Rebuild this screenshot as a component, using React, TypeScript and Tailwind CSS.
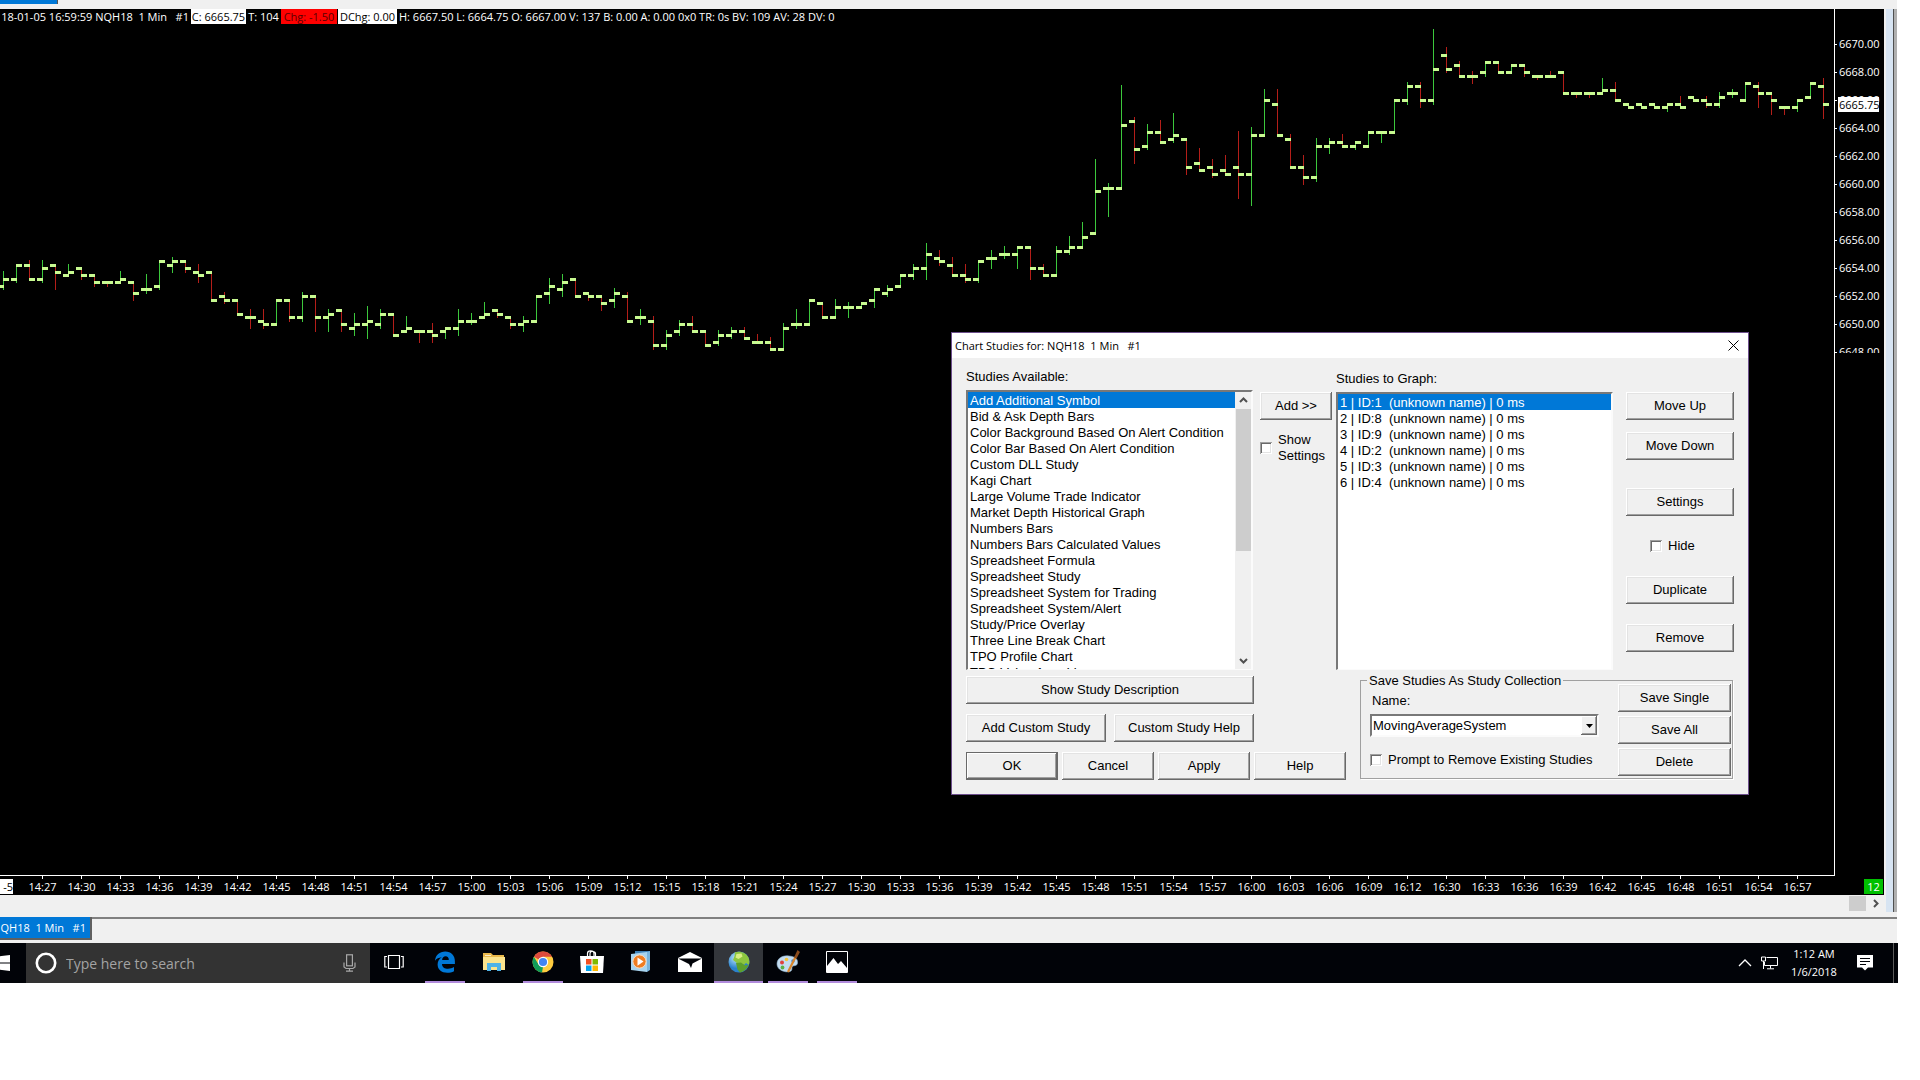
import React from "react";

type Bar = [open: number, high: number, low: number, close: number, up: 0 | 1];

// Each value counts quarter points below 6670.00.
const BARS: Bar[] = [
  [69, 65, 70, 67, 1], [67, 63, 68, 63, 1], [63, 62, 67, 67, 0], [67, 62, 68, 64, 1], [63, 63, 70, 65, 0],
  [66, 63, 66, 65, 1], [64, 64, 67, 66, 0], [66, 66, 69, 68, 0], [68, 68, 69, 68, 0], [68, 65, 68, 67, 1],
  [68, 68, 73, 71, 0], [70, 66, 71, 70, 1], [69, 62, 70, 62, 1], [63, 61, 65, 62, 1], [62, 62, 65, 64, 0],
  [65, 63, 68, 66, 0], [65, 65, 73, 73, 0], [72, 71, 74, 73, 0], [73, 73, 77, 77, 0], [78, 76, 81, 78, 0],
  [79, 76, 81, 80, 0], [80, 73, 80, 73, 1], [73, 73, 79, 78, 0], [78, 71, 79, 72, 1], [72, 72, 82, 78, 0],
  [78, 76, 82, 77, 1], [76, 76, 82, 80, 0], [81, 77, 83, 80, 1], [80, 75, 84, 79, 1], [80, 76, 81, 77, 1],
  [77, 77, 83, 83, 0], [82, 78, 82, 81, 1], [82, 82, 85, 82, 0], [82, 80, 85, 83, 0], [82, 81, 84, 81, 1],
  [81, 76, 83, 79, 1], [79, 77, 80, 79, 1], [78, 74, 78, 77, 1], [76, 76, 78, 77, 0], [78, 78, 81, 80, 0],
  [80, 78, 82, 79, 1], [79, 72, 79, 72, 1], [71, 67, 74, 69, 1], [70, 66, 72, 68, 1], [67, 67, 72, 72, 0],
  [71, 71, 73, 72, 0], [72, 72, 76, 74, 0], [73, 70, 75, 71, 1], [72, 71, 79, 79, 0], [78, 76, 80, 78, 1],
  [79, 78, 87, 86, 0], [86, 82, 87, 83, 1], [82, 79, 83, 80, 1], [80, 78, 82, 82, 0], [82, 82, 86, 86, 0],
  [85, 82, 86, 83, 1], [83, 81, 84, 82, 1], [82, 81, 84, 84, 0], [85, 83, 85, 85, 0], [85, 84, 87, 87, 0],
  [87, 80, 87, 81, 1], [80, 76, 81, 80, 1], [80, 73, 80, 73, 1], [74, 74, 78, 78, 0], [78, 73, 78, 75, 1],
  [75, 74, 78, 75, 1], [75, 74, 75, 74, 1], [73, 70, 75, 70, 1], [71, 69, 72, 70, 1], [69, 66, 69, 66, 1],
  [66, 63, 67, 64, 1], [64, 57, 67, 60, 1], [61, 59, 63, 62, 0], [63, 61, 66, 66, 0], [66, 63, 68, 67, 0],
  [67, 62, 68, 62, 1], [61, 59, 64, 61, 1], [60, 58, 61, 60, 1], [60, 58, 64, 58, 1], [58, 58, 67, 64, 0],
  [64, 63, 66, 66, 0], [66, 58, 66, 59, 1], [59, 55, 60, 58, 1], [58, 51, 58, 55, 1], [54, 33, 54, 42, 1],
  [41, 40, 49, 41, 1], [41, 12, 41, 23, 1], [22, 21, 34, 30, 0], [29, 23, 30, 25, 1], [25, 22, 28, 28, 0],
  [27, 20, 28, 26, 1], [27, 27, 37, 35, 0], [34, 30, 36, 36, 0], [35, 33, 38, 37, 0], [36, 32, 37, 37, 0],
  [35, 25, 44, 37, 0], [37, 24, 46, 26, 1], [26, 13, 26, 16, 1], [17, 13, 26, 26, 0], [27, 26, 35, 35, 0],
  [35, 32, 40, 38, 0], [38, 27, 39, 29, 1], [29, 27, 31, 28, 1], [28, 26, 29, 29, 0], [29, 28, 30, 28, 1],
  [29, 25, 29, 25, 1], [25, 25, 28, 25, 1], [25, 16, 25, 16, 1], [16, 11, 17, 12, 1], [12, 11, 18, 16, 0],
  [16, -4, 17, 7, 1], [3, 1, 8, 7, 0], [6, 5, 9, 9, 0], [9, 8, 11, 9, 0], [8, 5, 9, 5, 1],
  [5, 5, 8, 8, 0], [8, 6, 8, 6, 1], [6, 6, 9, 8, 0], [9, 9, 10, 9, 0], [9, 8, 9, 9, 0],
  [8, 8, 14, 14, 0], [14, 14, 15, 14, 0], [14, 14, 15, 14, 0], [14, 10, 14, 13, 1], [13, 11, 16, 16, 0],
  [17, 17, 18, 18, 0], [17, 17, 18, 18, 0], [17, 17, 18, 18, 0], [18, 17, 19, 17, 1], [17, 15, 18, 18, 0],
  [15, 15, 16, 16, 0], [16, 15, 18, 17, 0], [17, 14, 18, 15, 1], [14, 13, 15, 14, 1], [16, 11, 16, 11, 1],
  [12, 11, 18, 14, 0], [14, 14, 20, 16, 0], [18, 18, 20, 18, 0], [18, 16, 19, 16, 1], [15, 11, 15, 11, 1],
  [12, 10, 21, 17, 0],
];

const TIMES: string[] = (() => {
  const out: string[] = [];
  for (let m = 14 * 60 + 27; m <= 16 * 60 + 57; m += 3) {
    if (m > 16 * 60 + 12 && m < 16 * 60 + 30) continue;
    out.push(`${Math.floor(m / 60)}:${String(m % 60).padStart(2, "0")}`);
  }
  return out;
})();

const PRICES = Array.from({ length: 12 }, (_, i) => `${6670 - i * 2}.00`);

const STUDIES = [
  "Add Additional Symbol", "Bid & Ask Depth Bars", "Color Background Based On Alert Condition",
  "Color Bar Based On Alert Condition", "Custom DLL Study", "Kagi Chart", "Large Volume Trade Indicator",
  "Market Depth Historical Graph", "Numbers Bars", "Numbers Bars Calculated Values", "Spreadsheet Formula",
  "Spreadsheet Study", "Spreadsheet System for Trading", "Spreadsheet System/Alert", "Study/Price Overlay",
  "Three Line Break Chart", "TPO Profile Chart", "TPO Value Area Lines",
];

const GRAPHED = [
  "1 | ID:1  (unknown name) | 0 ms", "2 | ID:8  (unknown name) | 0 ms", "3 | ID:9  (unknown name) | 0 ms",
  "4 | ID:2  (unknown name) | 0 ms", "5 | ID:3  (unknown name) | 0 ms", "6 | ID:4  (unknown name) | 0 ms",
];

const py = (q: number) => Math.round(35 + q * 3.5);

function PriceBars() {
  return (
    <svg width="1834" height="866" viewBox="0 0 1834 866" className="block shrink-0" shapeRendering="crispEdges" aria-label="NQH18 1 minute bars">
      {BARS.map(([, h, l, , up], i) => (
        <rect key={i} x={3 + i * 13} y={py(h) - 1} width="1" height={py(l) - py(h) + 2} fill={up ? "#3cc83c" : "#b41e19"} />
      ))}
      {BARS.map(([o, , , c], i) => (
        <g key={i} fill="#c8fa91">
          <rect x={-2 + i * 13} y={py(o) - 1} width="6" height="3" />
          <rect x={3 + i * 13} y={py(c) - 1} width="6" height="3" />
        </g>
      ))}
    </svg>
  );
}

function PriceAxis() {
  return (
    <div className="relative w-[50px] shrink-0 border-l border-white text-[11px] text-white">
      <div className="h-[344px] overflow-hidden pt-[21px]">
        {PRICES.map((p) => (
          <div key={p} className="flex h-7 items-center gap-[2px]">
            <span className="h-px w-[2px] bg-white" />
            <span>{p}</span>
          </div>
        ))}
      </div>
      <span className="absolute left-[3px] top-[88px] h-[15px] w-[41px] bg-white pl-px leading-[15px] text-black">6665.75</span>
    </div>
  );
}

function TimeAxis() {
  return (
    <div className="flex h-5 justify-end overflow-hidden bg-black text-[11px] leading-[16px] text-white">
      <div className="flex w-[1817px] shrink-0 justify-end border-t border-white">
        <div className="w-[23px] pt-[3px]">
          <span className="block h-[15px] w-[13px] bg-white text-right text-black">-5</span>
        </div>
        {TIMES.map((t) => (
          <div key={t} className="flex w-[39px] flex-col items-center">
            <span className="h-[3px] w-px bg-white" />
            <span>{t}</span>
          </div>
        ))}
      </div>
      <div className="flex w-[67px] shrink-0 justify-between pr-px">
        <span className="h-px w-[18px] bg-white" />
        <span className="mt-1 h-[15px] w-[19px] bg-[#00c000] text-center">12</span>
      </div>
    </div>
  );
}

function Btn({ children, className = "", primary = false }: { children: React.ReactNode; className?: string; primary?: boolean }) {
  const edge = primary
    ? "border border-[#696969] shadow-[inset_-1px_-1px_0_#696969,inset_1px_1px_0_#fff,inset_-2px_-2px_0_#a0a0a0]"
    : "shadow-[inset_-1px_-1px_0_#696969,inset_1px_1px_0_#fff,inset_-2px_-2px_0_#a0a0a0,inset_2px_2px_0_#e3e3e3]";
  return (
    <button type="button" className={`h-7 bg-[#f0f0f0] text-center ${edge} ${className}`}>
      {children}
    </button>
  );
}

function Check({ children, className = "" }: { children: React.ReactNode; className?: string }) {
  return (
    <label className={`flex items-center gap-[6px] ${className}`}>
      <input type="checkbox" className="size-3 shrink-0 appearance-none bg-white shadow-[inset_1px_1px_0_#a0a0a0,inset_-1px_-1px_0_#fff,inset_2px_2px_0_#696969,inset_-2px_-2px_0_#e3e3e3]" />
      <span>{children}</span>
    </label>
  );
}

function ListBox({ items, label, scroll = false, className }: { items: string[]; label: string; scroll?: boolean; className: string }) {
  return (
    <div className={`flex overflow-hidden border-2 border-b border-b-[#fbfbfb] border-l-[#787878] border-r-[#fbfbfb] border-t-[#787878] bg-white ${className}`}>
      <ul role="listbox" aria-label={label} className="min-w-0 flex-1 overflow-hidden whitespace-pre">
        {items.map((s, i) => (
          <li key={s} role="option" aria-selected={i === 0} className={`h-4 pl-[2px] leading-[18px] ${i === 0 ? "bg-[#0078d7] text-white" : ""}`}>
            {s}
          </li>
        ))}
      </ul>
      {scroll && (
        <div className="flex w-4 flex-col items-center bg-[#f0f0f0]">
          <Chevron className="h-[17px]" d="M1 6l3.500-3.500L8 6" />
          <div className="h-[142px] w-[15px] bg-[#cdcdcd]" />
          <div className="flex-1" />
          <Chevron className="h-[17px]" d="M1 3l3.500 3.500L8 3" />
        </div>
      )}
    </div>
  );
}

function Chevron({ d, className = "" }: { d: string; className?: string }) {
  return (
    <svg width="9" height="9" viewBox="0 0 9 9" fill="none" stroke="#505050" strokeWidth="2" className={className}>
      <path d={d} />
    </svg>
  );
}

function StudiesDialog() {
  return (
    <section role="dialog" aria-label="Chart Studies" className="absolute right-[171px] top-[332px] w-[798px] border border-[#6d4f8c] bg-[#f0f0f0] font-['Liberation_Sans',Arial,sans-serif] text-[13px] leading-4 text-black">
      <header className="flex h-[25px] items-center justify-between bg-white pl-[3px] pr-[9px] font-['Open_Sans','Noto_Sans',sans-serif] text-[11px]">
        <h2 className="whitespace-pre">Chart Studies for: NQH18  1 Min   #1</h2>
        <button type="button" aria-label="Close">
          <svg width="11" height="11" viewBox="0 0 11 11" stroke="#000" fill="none"><path d="M.5.5l10 10M10.500.5l-10 10" /></svg>
        </button>
      </header>
      <div className="flex pl-[14px] pt-[10px]">
        <div className="w-[287px]">
          <h3 className="h-[22px] leading-[18px]">Studies Available:</h3>
          <ListBox items={STUDIES} label="Studies Available" scroll className="h-[280px]" />
        </div>
        <div className="ml-[7px] w-[72px] pt-[24px]">
          <Btn className="w-full">Add &gt;&gt;</Btn>
          <Check className="mt-3 w-[74px]">Show Settings</Check>
        </div>
        <div className="ml-1 w-[277px] pt-[2px]">
          <h3 className="h-[22px] leading-[18px]">Studies to Graph:</h3>
          <ListBox items={GRAPHED} label="Studies to Graph" className="h-[278px]" />
        </div>
        <div className="ml-[13px] flex w-[108px] flex-col pt-[24px]">
          <Btn>Move Up</Btn>
          <Btn className="mt-3">Move Down</Btn>
          <Btn className="mt-7">Settings</Btn>
          <Check className="mt-[22px] pl-6">Hide</Check>
          <Btn className="mt-[22px]">Duplicate</Btn>
          <Btn className="mt-5">Remove</Btn>
        </div>
      </div>
      <div className="flex pb-[14px] pl-[14px] pt-[2px]">
        <div className="flex w-[380px] flex-col gap-[10px] pt-1">
          <Btn className="w-[288px]">Show Study Description</Btn>
          <div className="flex gap-2">
            <Btn className="w-[140px]">Add Custom Study</Btn>
            <Btn className="w-[140px]">Custom Study Help</Btn>
          </div>
          <div className="flex gap-1">
            <Btn primary className="w-[92px]">OK</Btn>
            <Btn className="w-[92px]">Cancel</Btn>
            <Btn className="w-[92px]">Apply</Btn>
            <Btn className="w-[92px]">Help</Btn>
          </div>
        </div>
        <fieldset className="ml-[14px] h-[107px] w-[373px] border border-[#a0a0a0] px-[1px] shadow-[1px_1px_0_#fff]">
          <legend className="ml-[5px] h-4 px-[2px] leading-[18px]">Save Studies As Study Collection</legend>
          <div className="-mt-1 flex justify-between">
            <div className="w-[240px] pl-2 pt-2">
              <label htmlFor="collection" className="block h-4 pl-[2px] leading-[18px]">Name:</label>
              <div className="relative mt-[6px] h-[23px] w-[229px]">
                <select id="collection" className="h-full w-full appearance-none border-2 border-b-[#fbfbfb] border-l-[#787878] border-r-[#fbfbfb] border-t-[#787878] bg-white pl-px text-[13px] leading-4">
                  <option>MovingAverageSystem</option>
                </select>
                <span className="pointer-events-none absolute bottom-[2px] right-[2px] top-[2px] flex w-4 items-center justify-center bg-[#f0f0f0] shadow-[inset_-1px_-1px_0_#696969,inset_1px_1px_0_#fff,inset_-2px_-2px_0_#a0a0a0]">
                  <svg width="7" height="4" viewBox="0 0 7 4"><path d="M0 0h7L3.500 4z" /></svg>
                </span>
              </div>
              <Check className="mt-[14px] whitespace-nowrap leading-[18px]">Prompt to Remove Existing Studies</Check>
            </div>
            <div className="flex w-[113px] flex-col gap-1">
              <Btn>Save Single</Btn>
              <Btn>Save All</Btn>
              <Btn>Delete</Btn>
            </div>
          </div>
        </fieldset>
      </div>
    </section>
  );
}

function Task({ label, children, open = false, active = false, className = "w-[49px]" }: { label: string; children: React.ReactNode; open?: boolean; active?: boolean; className?: string }) {
  return (
    <button type="button" aria-label={label} className={`flex h-full flex-col items-center ${active ? "bg-[#33363b]" : ""} ${className}`}>
      <span className="flex flex-1 items-center">{children}</span>
      <span className={`h-[2px] ${active ? "w-full" : "w-10"} ${open ? "bg-[#b18bdc]" : ""}`} />
    </button>
  );
}

function Taskbar() {
  return (
    <footer className="flex h-10 items-center bg-[#010308] font-['Open_Sans','Noto_Sans',sans-serif] text-white">
      <button type="button" aria-label="Start" className="flex h-full w-[26px] shrink-0 items-center">
        <svg width="10" height="16" viewBox="0 0 10 16" fill="#fff"><path d="M0 1.300h.5v6H0zM1.500 1L10 0v7.500H0V1.200zM0 8.500h10V16L0 14.700z" /></svg>
      </button>
      <label className="flex h-full w-[344px] shrink-0 items-center bg-[#333] pl-[9px] pr-[14px]">
        <svg width="22" height="22" viewBox="0 0 22 22" fill="none"><circle cx="11" cy="11" r="9.200" stroke="#fff" strokeWidth="2.600" /></svg>
        <input type="text" aria-label="Search" placeholder="Type here to search" className="ml-[9px] min-w-0 flex-1 bg-transparent text-[14px] placeholder:text-[#a3a3a3]" />
        <svg width="13" height="18" viewBox="0 0 13 18" fill="none" stroke="#a8a8a8" strokeWidth="1.200"><rect x="3.600" y=".8" width="5.800" height="11" /><path d="M1 8.500v4.500l2 1.500h7l2-1.500V8.500M6.500 14.500V17M3 17.200h7" /></svg>
      </label>
      <Task label="Task View" className="mr-[2px] w-12">
        <svg width="20" height="16" viewBox="0 0 20 16" fill="none" stroke="#fff" strokeWidth="1.200"><path d="M4.500 1.500h11v13h-11zM3 2.500H.8v10.500H3M17 2.500h2.200v10.500H17" /></svg>
      </Task>
      <Task label="Edge" open>
        <svg width="22" height="22" viewBox="0 0 22 22"><path fill="#0078d7" d="M1 9.700C1.600 4.200 5.600.6 11.200.6c6 0 9.700 4 9.700 9.700v2.600H8c.2 3.300 2.700 4.800 6 4.800 2.300 0 4.200-.6 6-1.700v4.200c-1.900 1-4.300 1.500-6.800 1.500-5.700 0-9.600-3.100-9.600-8.200 0-3.200 1.600-5.700 4.200-7.200C4.800 6.600 2.500 7.800 1 9.700zm7.100-.8h6.700c0-2.300-1.200-3.600-3.200-3.600-1.900 0-3.200 1.300-3.500 3.600z" /></svg>
      </Task>
      <Task label="File Explorer">
        <svg width="22" height="20" viewBox="0 0 22 20"><path fill="#e9b84a" d="M0 1h8l2 2h11v15H0z" /><path fill="#fbe48d" d="M0 5h22v13H0z" /><path fill="#fff" opacity=".7" d="M2 3h6v1H2z" /><path fill="#4fb3e8" d="M4 11h14v8h-4v-4H8v4H4z" /></svg>
      </Task>
      <Task label="Chrome" open>
        <svg width="22" height="22" viewBox="0 0 22 22"><circle cx="11" cy="11" r="10.500" fill="#ffcd40" /><path fill="#dd4b3e" d="M11 11L1.900 5.750A10.500 10.500 0 0 1 20.100 5.750H11z" /><path fill="#0f9d58" d="M1.900 5.750L6.500 13.600 11 16l-1 5.450A10.500 10.500 0 0 1 1.900 5.750z" /><circle cx="11" cy="11" r="5.200" fill="#fff" /><circle cx="11" cy="11" r="4.100" fill="#4285f4" /></svg>
      </Task>
      <Task label="Store">
        <svg width="24" height="24" viewBox="0 0 24 24"><path d="M7.500 7V3.500C7.500 1.700 9 .8 10.500.8S14 1.700 14 3.500V7M10 6V3.500c0-1.500 1.300-2 2.500-2s3 .7 3 2.200V7" fill="none" stroke="#fff" strokeWidth="1.200" /><path fill="#fff" d="M0 6h24l-1 17H1z" /><path fill="#f25022" d="M6 9h5.500v5.500H6z" /><path fill="#7fba00" d="M12.500 9H18v5.500h-5.500z" /><path fill="#00a4ef" d="M6 15.500h5.500V21H6z" /><path fill="#ffb900" d="M12.500 15.500H18V21h-5.500z" /></svg>
      </Task>
      <Task label="Media Player">
        <svg width="22" height="22" viewBox="0 0 22 22"><path fill="#3f82b8" d="M5 0h15v19H5z" /><path fill="#a8d4ef" d="M1 3l16-2v20L1 19z" /><path fill="#79b4dc" d="M17 1l3-1v19l-3 2z" /><circle cx="9.500" cy="10.500" r="6.600" fill="#ef7d22" stroke="#f9dcc0" /><path fill="#fff" d="M7.500 6.500l6 4-6 4.200z" /></svg>
      </Task>
      <Task label="Mail">
        <svg width="24" height="20" viewBox="0 0 24 20"><path fill="#fff" d="M0 6l12-6 12 6v14H0z" /><path fill="#010308" d="M0 6.500l11 5.500 2 4 1.500-4.500L24 6.500z" /></svg>
      </Task>
      <Task label="Trading platform" open active>
        <svg width="22" height="22" viewBox="0 0 22 22"><defs><radialGradient id="sea" cx=".35" cy=".3"><stop offset="0" stopColor="#bfe8ff" /><stop offset="1" stopColor="#2b82cc" /></radialGradient></defs><circle cx="11" cy="11" r="10.500" fill="url(#sea)" /><path fill="#8ec63f" d="M7 1.300C12-.5 18 1.500 20.500 6.500c1 2.500 1.200 5 .4 7.500L18 12l-2 2-3-2-3.500.5L5 9l1.500-4z" /><path fill="#5da02c" d="M8 12l5-.5 4 3 3.500-1C19.500 17.500 16.500 20.500 12 21.400l-2.500-2.900z" /><path fill="#d9ef84" d="M8.500 3l5-.5 1 3-4 2.500-3-1.500z" /></svg>
      </Task>
      <Task label="Paint" open>
        <svg width="24" height="24" viewBox="0 0 24 24"><path fill="#c3dcf0" stroke="#8fb3cf" strokeWidth=".6" d="M1 14C1 8 7 5 13 6c6 .5 9 3 8.500 7-.4 3.500-3.500 2-5 3.500-1.300 1.500.5 4-2.500 5C9 23 1 20 1 14z" /><circle cx="6" cy="12.500" r="2" fill="#e0423c" /><circle cx="10.500" cy="9.500" r="1.800" fill="#f6c53c" /><circle cx="6.500" cy="17.500" r="1.900" fill="#5bb244" /><circle cx="17" cy="11" r="1.700" fill="#3b7dcc" /><path d="M12 22L19.500 7" stroke="#d9862c" strokeWidth="2.200" /><path fill="#8a4b1d" d="M18 7.500L21.500 0 24 2l-3.500 6.500z" /></svg>
      </Task>
      <Task label="Photos" open>
        <svg width="22" height="22" viewBox="0 0 22 22"><path d="M.5.5h21v21H.5z" fill="#010308" stroke="#fff" /><path fill="#fff" d="M1 21v-6l6.500-8L12 13l3-3 6 7v4z" /></svg>
      </Task>
      <div className="flex-1" />
      <button type="button" aria-label="Show hidden icons" className="mr-[9px]">
        <svg width="14" height="8" viewBox="0 0 14 8" fill="none" stroke="#fff" strokeWidth="1.300"><path d="M1 7l6-6 6 6" /></svg>
      </button>
      <svg width="17" height="14" viewBox="0 0 17 14" fill="none" stroke="#fff" className="mr-[9px]"><path d="M5.500 1.500h11v8H3.500V6M.5 1h4v4h-4zM2.500 5v8M9.500 9.500v3M6 12.800h7" /></svg>
      <div className="w-[54px] text-center text-[11px] leading-[18px]">
        <p>1:12 AM</p>
        <p>1/6/2018</p>
      </div>
      <button type="button" aria-label="Notifications" className="ml-4 mr-5">
        <svg width="16" height="16" viewBox="0 0 16 16"><path fill="#fff" d="M0 0h16v12.500h-5L8 15.500l-3-3H0z" /><path stroke="#010308" d="M3 3.500h10M3 6.500h10M3 9.500h6" /></svg>
      </button>
      <span className="mr-1 h-full w-px bg-[#5a5a5a]" />
    </footer>
  );
}

export default function App() {
  return (
    <div className="relative min-h-screen overflow-hidden bg-white pr-[22px] font-['Open_Sans','Noto_Sans',sans-serif]">
      <main className="mr-px bg-[#f0f0f0]">
        <div className="h-[9px]">
          <div className="h-1 w-[58px] border-r border-[#555] bg-[#0078d7]" />
        </div>
        <div className="flex">
          <div className="min-w-0 flex-1">
            <div className="relative flex h-[866px] bg-black">
              <div className="flex min-w-0 flex-1 justify-end overflow-hidden">
                <PriceBars />
              </div>
              <PriceAxis />
              <div className="absolute left-0 top-0 flex h-[15px] whitespace-pre text-[11px] leading-[15px] text-white">
                <span className="flex w-[191px] justify-end overflow-hidden pr-[2px]">18-01-05 16:59:59 NQH18  1 Min   #1</span>
                <span className="w-[55px] bg-white text-center text-black">C: 6665.75</span>
                <span className="w-[35px] text-center">T: 104</span>
                <span className="w-[56px] bg-[#ff0000] text-center text-[#5a0000]">Chg: -1.50</span>
                <span className="ml-px w-[59px] bg-white text-center text-black">DChg: 0.00</span>
                <span className="pl-[2px]">H: 6667.50 L: 6664.75 O: 6667.00 V: 137 B: 0.00 A: 0.00 0x0 TR: 0s BV: 109 AV: 28 DV: 0</span>
              </div>
            </div>
            <TimeAxis />
            <div className="flex h-[17px] items-center justify-end pr-1">
              <div className="h-[15px] w-[17px] bg-[#cdcdcd]" />
              <Chevron className="ml-[5px]" d="M3 1l3.500 3.500L3 8" />
            </div>
          </div>
          <div className="w-[2px] bg-[#f0f0f0]" />
          <div className="w-[7px] bg-[#d7e4f2]" />
          <div className="w-px bg-[#505050]" />
          <div className="w-[3px] bg-[#b0b0b0]" />
        </div>
        <div className="mt-[5px] flex h-[26px] items-start border-t-2 border-[#808080]">
          <button type="button" className="-mt-[2px] h-[23px] w-[92px] whitespace-pre border-b-2 border-r-2 border-[#606060] bg-[#0078d7] pr-1 text-right text-[11px] leading-[21px] text-white">QH18  1 Min   #1</button>
        </div>
      </main>
      <Taskbar />
      <StudiesDialog />
    </div>
  );
}
